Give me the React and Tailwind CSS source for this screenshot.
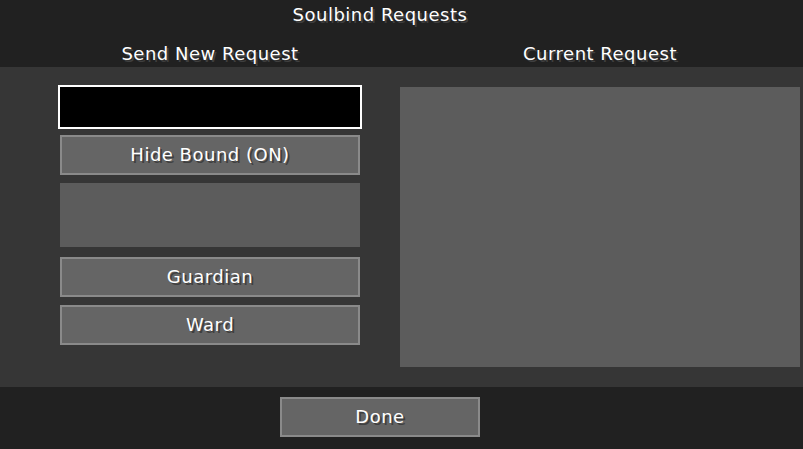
export default function App() {
  const txt = "text-white text-[18px] leading-none tracking-[0.5px] [font-family:'DejaVu_Sans',sans-serif] [text-shadow:2px_2px_0_#3f3f3f]";
  const btn = "w-[300px] h-[40px] bg-[#656565] border-2 border-[#8a8a8a] flex items-center justify-center";
  return (
    <div className="w-[803px] h-[449px] bg-[#212121] flex flex-col overflow-hidden">
      <div className="h-[67px] flex flex-col">
        <div className={`w-[760px] h-[30px] flex items-center justify-center ${txt}`}>Soulbind Requests</div>
        <div className="flex h-[37px]">
          <div className={`w-[420px] flex items-center justify-center pt-[10px] ${txt}`}>Send New Request</div>
          <div className={`w-[360px] flex items-center justify-center pt-[10px] ${txt}`}>Current Request</div>
        </div>
      </div>
      <div className="h-[320px] bg-[#363636] flex">
        <div className="w-[362px] pl-[58px] pt-[18px] flex flex-col">
          <div className="w-[304px] h-[44px] bg-black border-2 border-white"></div>
          <div className="pl-[2px] mt-[6px] flex flex-col">
            <div className={btn}><span className={txt}>Hide Bound (ON)</span></div>
            <div className="w-[300px] h-[64px] mt-[8px] bg-[#5c5c5c]"></div>
            <div className={`${btn} mt-[10px]`}><span className={txt}>Guardian</span></div>
            <div className={`${btn} mt-[8px]`}><span className={txt}>Ward</span></div>
          </div>
        </div>
        <div className="ml-[38px] mt-[20px] w-[400px] h-[280px] bg-[#5c5c5c]"></div>
      </div>
      <div className="flex-1 w-[760px] flex justify-center pt-[10px]">
        <div className="w-[200px] h-[40px] bg-[#656565] border-2 border-[#8a8a8a] flex items-center justify-center">
          <span className={txt}>Done</span>
        </div>
      </div>
    </div>
  );
}
